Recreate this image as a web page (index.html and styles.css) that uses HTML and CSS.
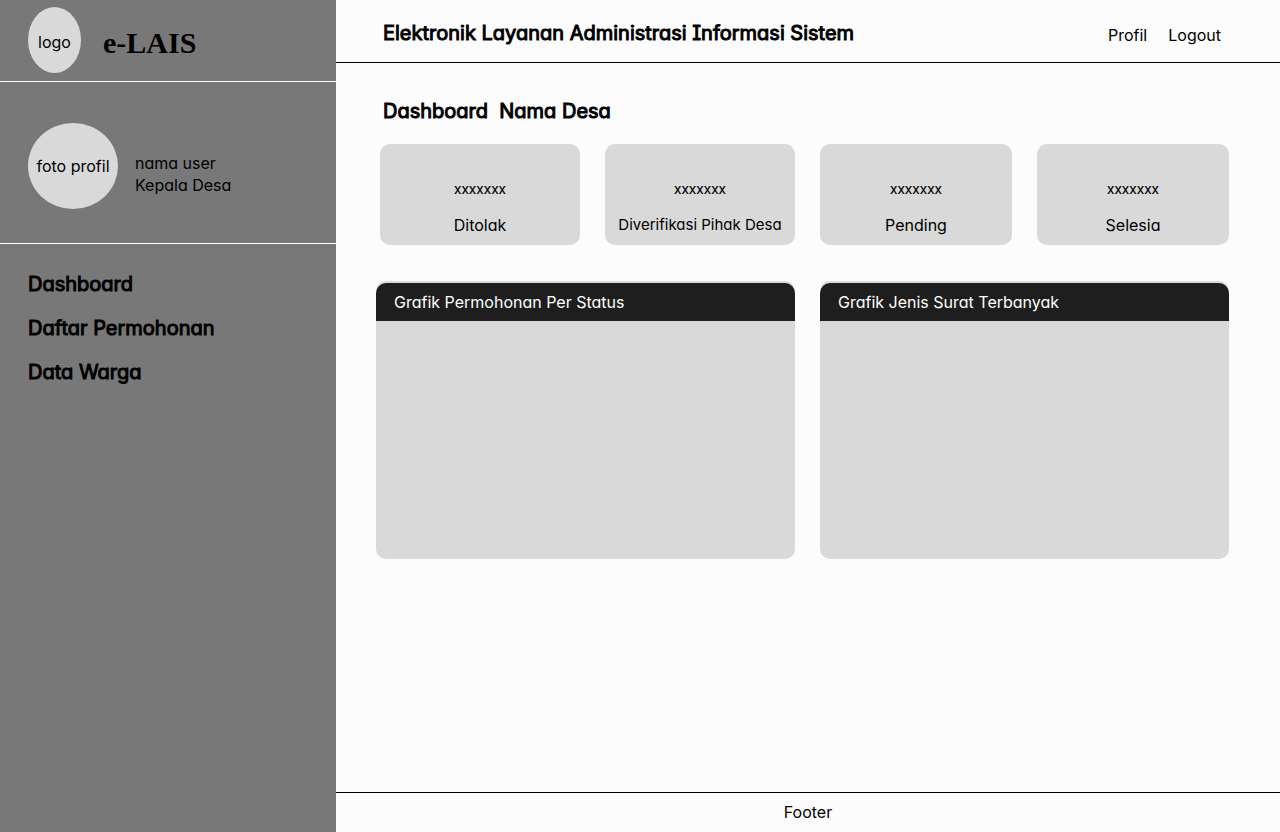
FILE: index.html
```html
<!DOCTYPE html>
<html lang="id">
<head>
<meta charset="utf-8">
<meta name="viewport" content="width=device-width, initial-scale=1">
<title>e-LAIS</title>
<link rel="stylesheet" href="styles.css">
</head>
<body>
<div class="app">
  <aside class="sidebar">
    <div class="brand">
      <div class="logo">logo</div>
      <div class="brand-name">e-LAIS</div>
    </div>
    <div class="user">
      <div class="avatar">foto profil</div>
      <div class="user-info">
        <div>nama user</div>
        <div>Kepala Desa</div>
      </div>
    </div>
    <nav class="menu">
      <a href="#">Dashboard</a>
      <a href="#">Daftar Permohonan</a>
      <a href="#">Data Warga</a>
    </nav>
  </aside>
  <div class="page">
    <header class="topbar">
      <h1 class="title">Elektronik Layanan Administrasi Informasi Sistem</h1>
      <nav class="account">
        <a href="#">Profil</a>
        <a href="#">Logout</a>
      </nav>
    </header>
    <main class="content">
      <h2 class="title">Dashboard&nbsp; Nama Desa</h2>
      <section class="cards">
        <div class="card"><div class="value">xxxxxxx</div><div class="label">Ditolak</div></div>
        <div class="card"><div class="value">xxxxxxx</div><div class="label label-small">Diverifikasi Pihak Desa</div></div>
        <div class="card"><div class="value">xxxxxxx</div><div class="label">Pending</div></div>
        <div class="card"><div class="value">xxxxxxx</div><div class="label">Selesia</div></div>
      </section>
      <section class="panels">
        <div class="panel"><h3 class="panel-head">Grafik Permohonan Per Status</h3></div>
        <div class="panel"><h3 class="panel-head">Grafik Jenis Surat Terbanyak</h3></div>
      </section>
    </main>
    <footer class="footer">Footer</footer>
  </div>
</div>
</body>
</html>
```
FILE: styles.css
```css
* { box-sizing: border-box; }
body {
  margin: 0;
  background: #fcfcfc;
  color: #000;
  font-family: Inter, "Liberation Sans", sans-serif;
  font-size: 16px;
  line-height: 22px;
  font-feature-settings: "cv11";
}
a { color: inherit; text-decoration: none; }
.app { display: flex; min-height: 100vh; }
.sidebar { flex: 0 0 336px; background: #787878; }
.brand {
  display: flex;
  align-items: center;
  gap: 22px;
  padding: 7px 28px 8px;
  border-bottom: 1px solid #fff;
}
.logo, .avatar {
  display: flex;
  align-items: center;
  justify-content: center;
  flex: none;
  border-radius: 50%;
  background: #d9d9d9;
  white-space: nowrap;
}
.logo { width: 53px; height: 66px; padding-top: 4px; }
.avatar { width: 90px; height: 86px; }
.brand-name {
  font-family: "Liberation Serif", serif;
  font-size: 30px;
  line-height: 34px;
  font-weight: 700;
  padding-top: 6px;
}
.user {
  display: flex;
  align-items: center;
  gap: 17px;
  padding: 41px 28px 34px;
  border-bottom: 1px solid #fff;
}
.user-info { padding-top: 16px; }
.menu {
  display: flex;
  flex-direction: column;
  gap: 20px;
  padding: 28px;
}
.menu a, .title {
  margin: 0;
  font-size: 20px;
  line-height: 24px;
  font-weight: 400;
  -webkit-text-stroke: 1px #000;
  font-feature-settings: "cv11", "cv08";
}
.page { flex: 1; min-width: 0; display: flex; flex-direction: column; }
.topbar {
  display: flex;
  align-items: center;
  justify-content: space-between;
  height: 63px;
  padding: 4px 59px 0 47px;
  border-bottom: 1px solid #000;
}
.account { display: flex; gap: 21px; padding-top: 4px; }
.content { flex: 1; padding: 36px 51px 36px 40px; }
.content .title { padding-left: 7px; }
.cards {
  display: grid;
  grid-template-columns: 200fr 190fr 192fr 192fr;
  gap: 25px;
  padding: 21px 0 36px 4px;
}
.card {
  height: 101px;
  padding-top: 34px;
  border-radius: 10px;
  background: #d9d9d9;
  text-align: center;
}
.value { font-family: Roboto, sans-serif; font-size: 15px; }
.label { margin-top: 14px; white-space: nowrap; }
.label-small { font-size: 15px; }
.panels {
  display: grid;
  grid-template-columns: 419fr 409fr;
  gap: 25px;
}
.panel {
  min-height: 278px;
  padding-top: 2px;
  border-radius: 10px;
  background: #d9d9d9;
}
.panel-head {
  margin: 0;
  padding: 8px 18px;
  border-radius: 10px 10px 0 0;
  background: #1e1e1e;
  color: #fff;
  font-size: 16px;
  font-weight: 400;
}
.footer {
  padding: 8px 0 9px;
  border-top: 1px solid #000;
  text-align: center;
}
```
